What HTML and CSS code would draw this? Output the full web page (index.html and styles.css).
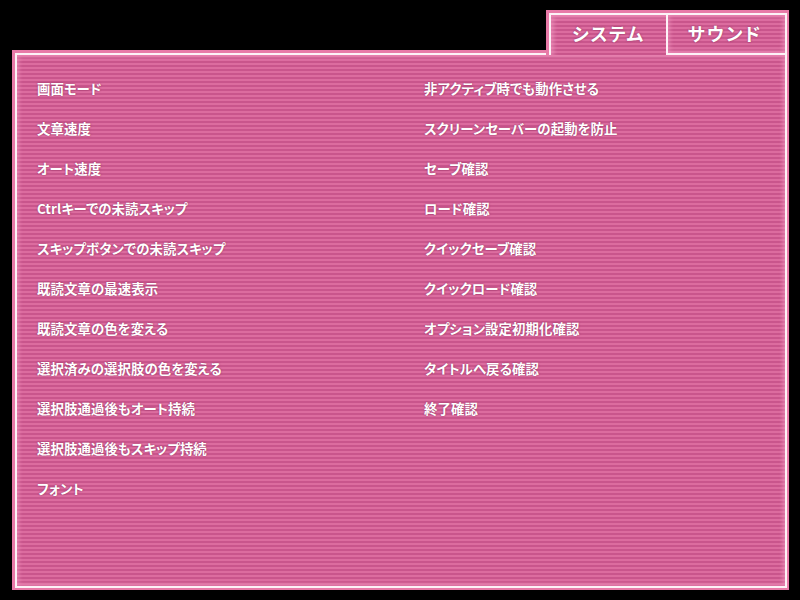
FILE: index.html
```html
<!DOCTYPE html>
<html lang="ja">
<head>
<meta charset="utf-8">
<title>システム</title>
<link rel="stylesheet" href="styles.css">
</head>
<body>
<div class="screen">
  <div class="tabs">
    <div class="tab tab-active">システム</div>
    <div class="tab tab-idle">サウンド</div>
  </div>
  <div class="panel">
    <ul class="col col-left">
      <li>画面モード</li>
      <li>文章速度</li>
      <li>オート速度</li>
      <li>Ctrlキーでの未読スキップ</li>
      <li>スキップボタンでの未読スキップ</li>
      <li>既読文章の最速表示</li>
      <li>既読文章の色を変える</li>
      <li>選択済みの選択肢の色を変える</li>
      <li>選択肢通過後もオート持続</li>
      <li>選択肢通過後もスキップ持続</li>
      <li>フォント</li>
    </ul>
    <ul class="col">
      <li>非アクティブ時でも動作させる</li>
      <li>スクリーンセーバーの起動を防止</li>
      <li>セーブ確認</li>
      <li>ロード確認</li>
      <li>クイックセーブ確認</li>
      <li>クイックロード確認</li>
      <li>オプション設定初期化確認</li>
      <li>タイトルへ戻る確認</li>
      <li>終了確認</li>
    </ul>
  </div>
</div>
</body>
</html>
```
FILE: styles.css
```css
html, body {
  margin: 0;
  padding: 0;
  background: #000;
}
.screen {
  width: 800px;
  height: 600px;
  box-sizing: border-box;
  padding: 10px 11px 10px 12px;
  display: flex;
  flex-direction: column;
  overflow: hidden;
  font-family: "Noto Sans CJK JP", "Liberation Sans", sans-serif;
  font-feature-settings: "palt";
  color: #fff;
}
.tabs {
  display: flex;
  align-self: flex-end;
  box-sizing: border-box;
  width: 243px;
  height: 45px;
  margin-bottom: -5px;
  position: relative;
  z-index: 1;
  border-style: solid;
  border-color: #e87aa8;
  border-width: 3px 2px 0 3px;
  background: repeating-linear-gradient(#c9558c 0 2px, #dc6c9f 2px 4px);
}
.tab {
  box-sizing: border-box;
  height: 42px;
  display: flex;
  align-items: center;
  justify-content: center;
  padding-bottom: 5px;
  font-size: 18px;
  font-weight: 700;
  letter-spacing: 1.6px;
  text-shadow: 0 0 2px #8c2f5e;
  border-top: 2px solid #fdf2f7;
  border-left: 2px solid #fdf2f7;
}
.tab-active {
  width: 117px;
  box-shadow: inset 3px 3px 4px rgba(240, 150, 190, 0.6);
}
.tab-idle {
  flex: 1;
  border-right: 2px solid #fdf2f7;
  border-bottom: 2px solid #fdf2f7;
  padding: 0 3px 3px 0;
  letter-spacing: 2px;
  box-shadow: inset 0 0 4px 2px rgba(240, 150, 190, 0.6);
}
.panel {
  flex: 1;
  display: flex;
  box-sizing: border-box;
  padding: 25px 0 0 22px;
  border-style: solid;
  border-color: #e87aa8;
  border-width: 3px 2px 2px 3px;
  box-shadow: inset 0 0 0 2px #fdf2f7, inset 0 0 4px 4px rgba(240, 150, 190, 0.6);
  background: repeating-linear-gradient(#c9558c 0 2px, #dc6c9f 2px 4px);
}
.col {
  list-style: none;
  margin: 0;
  padding: 0;
  font-size: 13.4px;
  font-weight: 700;
  letter-spacing: 0.1px;
  text-shadow: 0 0 2px #8c2f5e;
}
.col-left {
  width: 387px;
}
.col li {
  height: 40px;
  line-height: 20px;
}
```
